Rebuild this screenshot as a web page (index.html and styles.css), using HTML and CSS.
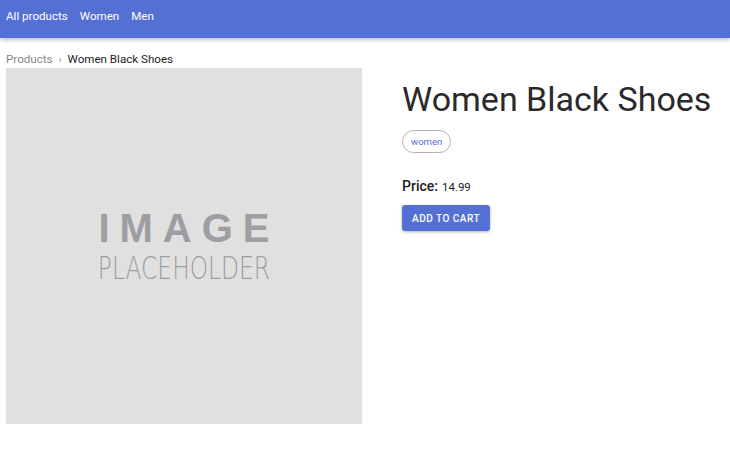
FILE: index.html
```html
<!DOCTYPE html>
<html>
<head>
<meta charset="utf-8">
<link rel="stylesheet" href="styles.css">
</head>
<body>
<header class="topbar">
  <nav class="nav">
    <a class="nav-link" href="#">All products</a>
    <a class="nav-link" href="#">Women</a>
    <a class="nav-link" href="#">Men</a>
  </nav>
</header>
<main class="page">
  <div class="crumbs">
    <a class="crumb" href="#">Products</a>
    <span class="sep">›</span>
    <span class="crumb-current">Women Black Shoes</span>
  </div>
  <div class="product">
    <div class="image">
      <div class="ph-big">IMAGE</div>
      <div class="ph-small">PLACEHOLDER</div>
    </div>
    <div class="info">
      <h1 class="title">Women Black Shoes</h1>
      <div class="tags"><span class="chip">women</span></div>
      <div class="price"><span class="price-label">Price:</span> <span class="price-value">14.99</span></div>
      <button class="btn">ADD TO CART</button>
    </div>
  </div>
</main>
</body>
</html>
```
FILE: styles.css
```css
* { box-sizing: border-box; }
body {
  margin: 0;
  font-family: Roboto, "Liberation Sans", sans-serif;
  background: #fff;
  color: #222;
}
.topbar {
  height: 38px;
  background: #5570d4;
  box-shadow: 0 2px 4px rgba(0,0,0,0.25);
  display: flex;
  align-items: flex-start;
  padding: 9px 6px 0;
}
.nav { display: flex; gap: 12px; }
.nav-link {
  color: #fff;
  text-decoration: none;
  font-size: 11.6px;
  line-height: 14px;
}
.page { padding: 0 6px; }
.crumbs {
  margin-top: 14px;
  font-size: 11.6px;
  display: flex;
  align-items: center;
  gap: 6px;
  height: 14px;
}
.crumb { color: #888; text-decoration: none; }
.sep { color: #888; font-size: 10px; }
.crumb-current { color: #222; }
.product {
  display: flex;
  gap: 40px;
  margin-top: 2px;
}
.image {
  width: 356px;
  height: 356px;
  background: #e0e0e0;
  display: flex;
  flex-direction: column;
  align-items: center;
  justify-content: center;
  color: #9d9da2;
  padding-top: 0;
}
.ph-big {
  font-family: "Liberation Sans", sans-serif;
  font-weight: 700;
  font-size: 40px;
  letter-spacing: 10px;
  margin-right: -10px;
  line-height: 40px;
}
.ph-small {
  font-family: "DejaVu Sans", sans-serif;
  font-weight: 200;
  font-size: 32px;
  line-height: 32px;
  transform: scaleX(0.73);
  margin-top: 4px;
  white-space: nowrap;
}
.info { padding-top: 9px; }
.title {
  margin: 0;
  font-weight: 400;
  font-size: 34px;
  line-height: 44px;
  color: #2a2a2a;
}
.tags { margin-top: 9px; }
.chip {
  display: inline-block;
  border: 1px solid #b0b0b8;
  border-radius: 12px;
  height: 23px;
  line-height: 21px;
  padding: 0 8px;
  font-size: 9.5px;
  color: #5570d4;
}
.price { margin-top: 23px; }
.price-label { font-size: 14px; font-weight: 500; }
.price-value { font-size: 11.5px; }
.btn {
  margin-top: 10px;
  background: #5570d4;
  color: #fff;
  border: none;
  border-radius: 3px;
  height: 26px;
  width: 88px;
  font-family: Roboto, sans-serif;
  font-weight: 500;
  font-size: 10px;
  letter-spacing: 0.5px;
  box-shadow: 0 1px 3px rgba(0,0,0,0.3);
  padding: 0;
}
```
